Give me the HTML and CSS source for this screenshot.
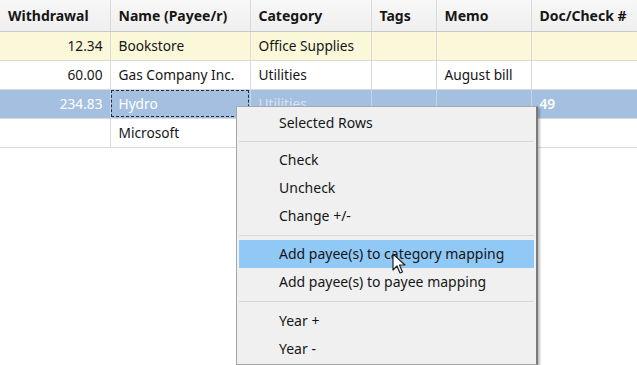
FILE: index.html
```html
<!DOCTYPE html>
<html lang="en">
<head>
    <meta charset="UTF-8">
    <title>Transactions</title>
    <link rel="stylesheet" href="styles.css">
</head>
<body>
    <div class="grid-wrap">
        <table class="grid">
            <thead>
                <tr>
                    <th class="c-withdrawal">Withdrawal</th>
                    <th class="c-name">Name (Payee/r)</th>
                    <th class="c-category">Category</th>
                    <th class="c-tags">Tags</th>
                    <th class="c-memo">Memo</th>
                    <th class="c-doc">Doc/Check #</th>
                </tr>
            </thead>
            <tbody>
                <tr class="row-new">
                    <td class="num">12.34</td>
                    <td>Bookstore</td>
                    <td>Office Supplies</td>
                    <td></td>
                    <td></td>
                    <td></td>
                </tr>
                <tr>
                    <td class="num">60.00</td>
                    <td>Gas Company Inc.</td>
                    <td>Utilities</td>
                    <td></td>
                    <td>August bill</td>
                    <td></td>
                </tr>
                <tr class="row-selected">
                    <td class="num">234.83</td>
                    <td class="focused">Hydro</td>
                    <td class="faded">Utilities</td>
                    <td></td>
                    <td></td>
                    <td class="bold">49</td>
                </tr>
                <tr>
                    <td></td>
                    <td>Microsoft</td>
                    <td></td>
                    <td></td>
                    <td></td>
                    <td></td>
                </tr>
            </tbody>
        </table>

        <div class="context-menu">
            <div class="menu-item">Selected Rows</div>
            <div class="menu-sep"></div>
            <div class="menu-item">Check</div>
            <div class="menu-item">Uncheck</div>
            <div class="menu-item">Change +/-</div>
            <div class="menu-sep wide-top"></div>
            <div class="menu-item hover">Add payee(s) to category mapping</div>
            <div class="menu-item">Add payee(s) to payee mapping</div>
            <div class="menu-sep wide"></div>
            <div class="menu-item">Year +</div>
            <div class="menu-item">Year -</div>
        </div>

        <svg class="cursor" width="14" height="22" viewBox="0 0 14 22">
            <path d="M1 1 L1 17 L5 13 L8 20 L10.5 19 L7.5 12 L13 12 Z" fill="#fff" stroke="#222" stroke-width="1.2" stroke-linejoin="round"/>
        </svg>
    </div>
</body>
</html>
```

FILE: styles.css
```css
* {
    box-sizing: border-box;
    margin: 0;
    padding: 0;
}

body {
    width: 637px;
    height: 365px;
    overflow: hidden;
    background: #fff;
    font-family: "Noto Sans", "Open Sans", sans-serif;
    font-size: 13.7px;
    color: #161616;
}

.grid-wrap {
    position: relative;
    width: 637px;
    height: 365px;
}

/* tabla */
.grid {
    width: 637px;
    border-collapse: collapse;
    table-layout: fixed;
    border-bottom: 1px solid #d4d4d4;
}

.grid th {
    height: 31px;
    text-align: left;
    font-size: 14px;
    font-weight: bold;
    padding: 0 8px;
    background: linear-gradient(#f7f7f7, #efefef);
    border-right: 1px solid #dadada;
    border-bottom: 1px solid #c9c9c9;
    white-space: nowrap;
}

.grid td {
    height: 29px;
    padding: 0 8px;
    border-right: 1px solid #dadada;
    border-bottom: 1px solid #dadada;
    white-space: nowrap;
    overflow: hidden;
}

.c-withdrawal { width: 110px; }
.c-name { width: 140px; }
.c-category { width: 121px; }
.c-tags { width: 65px; }
.c-memo { width: 95px; }
.c-doc { width: 106px; }

.grid td.num {
    text-align: right;
    padding-right: 7px;
}

.row-new td {
    background: #fbf8d9;
}

.row-selected td {
    background: #a4bfe0;
    color: #fff;
    border-right-color: #c4d6ec;
}

.row-selected td.focused {
    outline: 1px dashed #1d2d44;
    outline-offset: -2px;
}

.row-selected td.faded {
    color: #d6e3f3;
}

.row-selected td.bold {
    font-weight: 600;
}

/* menu contextual */
.context-menu {
    position: absolute;
    left: 236px;
    top: 106px;
    width: 302px;
    height: 259px;
    background: #f0f0f0;
    border: 1px solid #a8a8a8;
    border-right: 2px solid #7a7a7a;
    box-shadow: 2px 2px 2px rgba(0, 0, 0, 0.25);
    padding: 2px 2px 0;
    font-size: 14px;
}

.menu-item {
    height: 28px;
    line-height: 28px;
    padding-left: 40px;
    color: #161616;
}

.menu-item.hover {
    background: #90c8f6;
}

.menu-sep {
    height: 1px;
    background: #d7d7d7;
    margin: 4px 0;
}

.menu-sep.wide-top {
    margin: 5px 0 4px;
}

.menu-sep.wide {
    margin: 5px 0;
}

.cursor {
    position: absolute;
    left: 392px;
    top: 253px;
}
```
